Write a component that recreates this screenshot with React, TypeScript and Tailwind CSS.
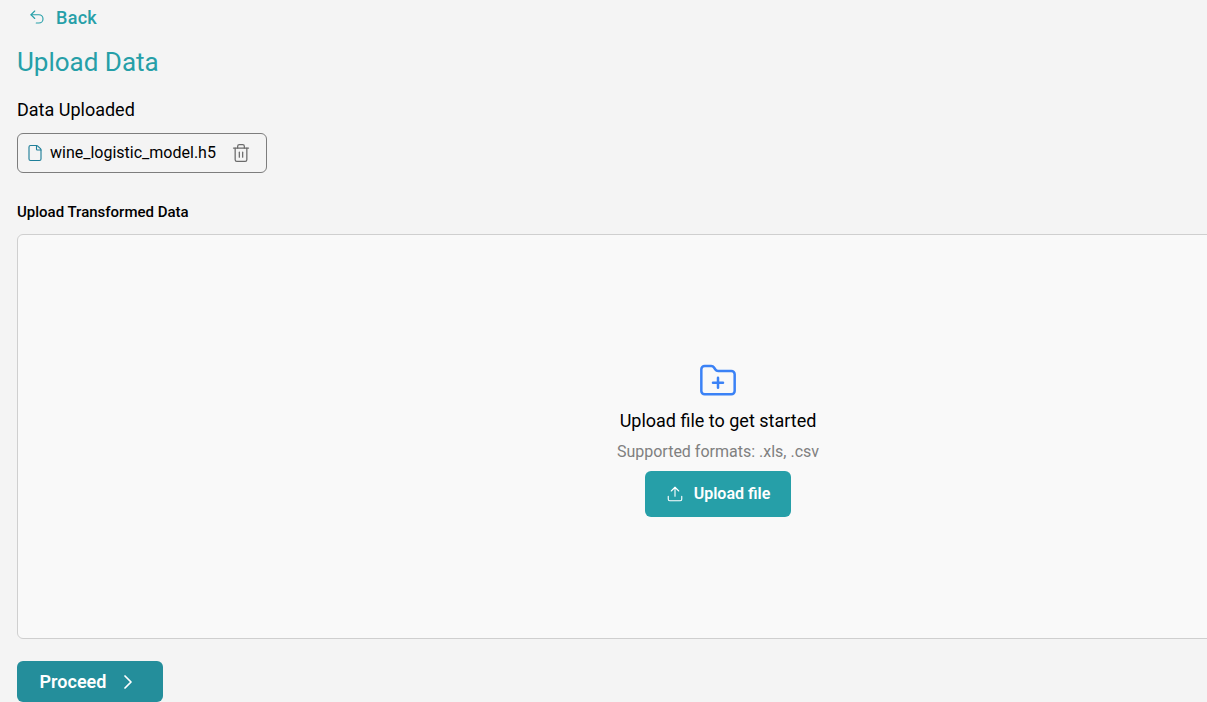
import { ChevronRight, File, FolderPlus, Trash2, Undo2, Upload } from 'lucide-react';

const App = () => {
  return (
    <div className="h-[702px] w-[1207px] overflow-hidden bg-[#f4f4f4] pl-[17px] font-['Roboto',sans-serif] text-black">
      <button className="ml-[11px] flex h-[34px] items-center gap-[10px] text-[18px] font-medium text-[#269fa8]">
        <Undo2 size={18} strokeWidth={1.5} />
        <span className="tracking-[0.3px]">Back</span>
      </button>

      <h1 className="mt-[10px] h-[36px] text-[26px] leading-[36px] text-[#269fa8]">Upload Data</h1>

      <p className="mt-[18px] h-[24px] text-[18px] leading-[24px]">Data Uploaded</p>

      <div className="mt-[11px] flex h-[40px] w-[250px] items-center rounded-md border border-[#7d7d7d] pl-[8px]">
        <File size={18} strokeWidth={1.5} className="text-[#1f7f99]" />
        <span className="ml-[6px] text-[16px] leading-[20px]">wine_logistic_model.h5</span>
        <Trash2 size={20} strokeWidth={1.5} className="ml-[15px] text-[#6b6b6b]" />
      </div>

      <p className="mt-[29px] h-[20px] text-[15px] font-medium leading-[20px]">Upload Transformed Data</p>

      <div className="mt-[12px] flex h-[405px] w-[1402px] flex-col items-center rounded-md border border-[#cfcfcf] bg-[#f9f9f9] pt-[126px]">
        <FolderPlus size={40} strokeWidth={1.5} className="text-[#3b82f6]" />
        <p className="mt-[8px] h-[24px] text-[18px] leading-[24px]">Upload file to get started</p>
        <p className="mt-[9px] h-[20px] text-[16px] leading-[20px] text-[#808080]">Supported formats: .xls, .csv</p>
        <button className="mt-[9px] flex h-[46px] w-[146px] items-center justify-center gap-[10px] rounded-md bg-[#269fa8] text-[16px] font-semibold text-white">
          <Upload size={18} strokeWidth={1.5} />
          Upload file
        </button>
      </div>

      <button className="mt-[22px] flex h-[41px] w-[146px] items-center justify-center gap-[10px] rounded-md bg-[#248e9b] text-[18px] font-semibold text-white">
        Proceed
        <ChevronRight size={24} strokeWidth={1.75} />
      </button>
    </div>
  );
};

export default App;
